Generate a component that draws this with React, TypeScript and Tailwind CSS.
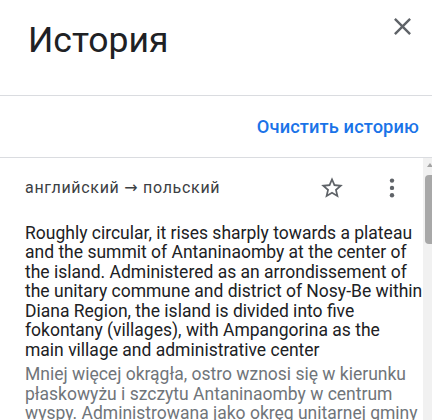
export default function App() {
  return (
    <div className="relative h-[420px] w-[432px] overflow-hidden bg-white font-['Roboto',sans-serif] text-[#202124]">
      {/* Header */}
      <div className="flex h-[96px] items-start justify-between border-b border-[#dadce0]">
        <h1 className="pl-[28px] pt-[23px] text-[35.5px] font-normal leading-none text-[#202124]">
          История
        </h1>
        <button className="mr-[15px] mt-[12px] text-[#5f6368]">
          <svg viewBox="0 0 24 24" className="h-[29px] w-[29px]" fill="currentColor">
            <path d="M19 6.41L17.59 5 12 10.59 6.41 5 5 6.41 10.59 12 5 17.59 6.41 19 12 13.41 17.59 19 19 17.59 13.41 12z" />
          </svg>
        </button>
      </div>

      {/* Clear history */}
      <div className="flex h-[62px] items-center justify-end border-b border-[#dadce0] pr-[13px]">
        <button className="text-[18.3px] font-medium tracking-[0.1px] text-[#1a73e8]">
          Очистить историю
        </button>
      </div>

      {/* History list */}
      <div className="relative">
        <div className="w-[423px] pl-[25px]">
          <div className="flex h-[60px] items-center">
            <span className="flex-1 text-[16px] tracking-[0.7px] text-[#3c4043]">
              английский <span className="font-['DejaVu_Sans',sans-serif] text-[16px]">→</span> польский
            </span>
            <button className="text-[#5f6368]">
              <svg viewBox="0 0 24 24" className="h-[26px] w-[26px]" fill="currentColor">
                <path d="M22 9.24l-7.19-.62L12 2 9.19 8.63 2 9.24l5.46 4.73L5.82 21 12 17.27 18.18 21l-1.63-7.03L22 9.24zM12 15.4l-3.76 2.27 1-4.28-3.32-2.88 4.38-.38L12 6.1l1.71 4.04 4.38.38-3.32 2.88 1 4.28L12 15.4z" />
              </svg>
            </button>
            <button className="ml-[35px] mr-[19px] flex w-[24px] justify-center text-[#5f6368]">
              <svg viewBox="0 0 6 20" className="h-[20px] w-[6px]" fill="currentColor">
                <circle cx="3" cy="2.6" r="2.2" />
                <circle cx="3" cy="9.9" r="2.2" />
                <circle cx="3" cy="17.2" r="2.2" />
              </svg>
            </button>
          </div>
          <p className="mt-[6px] text-[17.5px] leading-[19.45px] text-[#202124]">
            Roughly circular, it rises sharply towards a plateau and the summit of Antaninaomby at the center of the
            island. Administered as an arrondissement of the unitary commune and district of Nosy-Be within Diana
            Region, the island is divided into five fokontany (villages), with Ampangorina as the
            <br />
            main village and administrative center
          </p>
          <p className="mt-[5px] text-[17.5px] leading-[19.45px] text-[#70757a]">
            Mniej więcej okrągła, ostro wznosi się w kierunku płaskowyżu i szczytu Antaninaomby w centrum wyspy.
            Administrowana jako okręg unitarnej gminy i dystryktu Nosy-Be w regionie Diana, wyspa jest podzielona na
            pięć fokontany (wiosek), z Ampangoriną jako główną wioską i centrum administracyjnym
          </p>
        </div>

        {/* Scrollbar */}
        <div className="absolute bottom-[-400px] right-0 top-0 w-[9px] bg-[#f1f1f1]">
          <div className="absolute left-[4px] top-[5px] h-0 w-0 border-x-[3.5px] border-b-[4px] border-x-transparent border-b-[#a3a3a3]" />
          <div className="absolute left-[2px] top-[17px] h-[69px] w-[12px] rounded-[4px] bg-[#a8a8a8]" />
        </div>
      </div>
    </div>
  );
}
